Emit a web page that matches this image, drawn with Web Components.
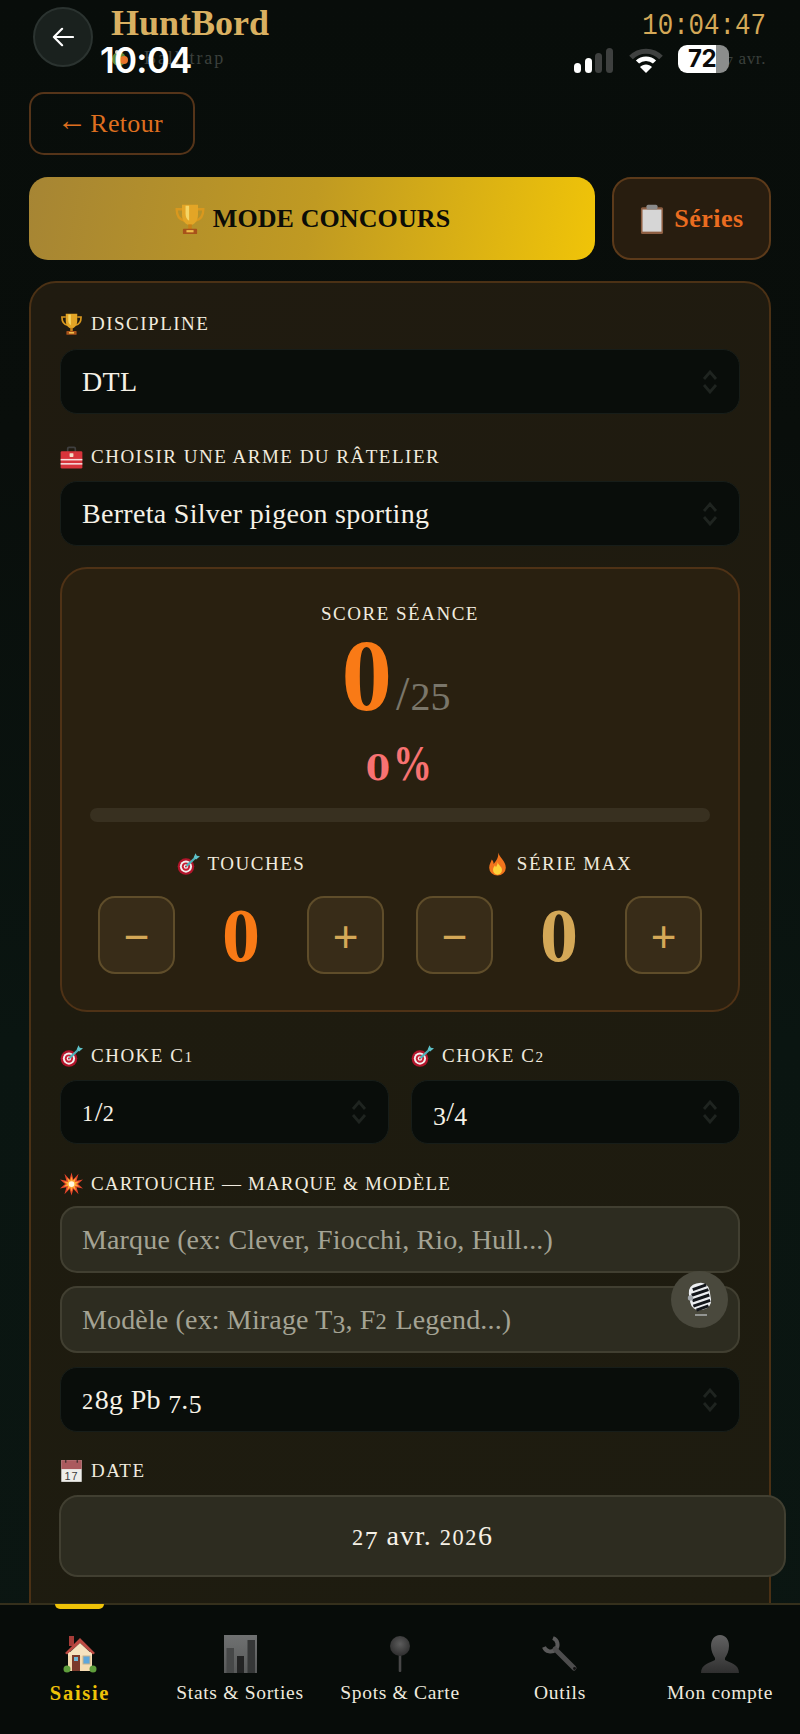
<!DOCTYPE html>
<html lang="fr"><head><meta charset="utf-8"><title>HuntBord</title>
<style>
html,body{margin:0;padding:0;background:#080d0a}
body{font-family:"Liberation Serif",serif;color:#f4efe4;width:800px;height:1734px;overflow:hidden}
</style></head><body>
<hb-app>
  <hb-status slot="overlay"></hb-status>
  <hb-mic slot="overlay"></hb-mic>
  <hb-header></hb-header>
  <hb-actions></hb-actions>
  <hb-card>
    <hb-label icon="trophy">Discipline</hb-label>
    <hb-select style="margin-top:13px">DTL</hb-select>
    <hb-label icon="toolbox" style="margin-top:31px">Choisir une arme du râtelier</hb-label>
    <hb-select style="margin-top:12px">Berreta Silver pigeon sporting</hb-select>
    <hb-score style="margin-top:21px"></hb-score>
    <hb-chokes style="margin-top:32px"></hb-chokes>
    <hb-label icon="boom" style="margin-top:28px;letter-spacing:1.15px">Cartouche — marque &amp; modèle</hb-label>
    <hb-input style="margin-top:10px" data-t="Marque (ex: Clever, Fiocchi, Rio, Hull...)"></hb-input>
    <hb-input style="margin-top:13px" data-t="Modèle (ex: Mirage T3, F2 Legend...)"></hb-input>
    <hb-select style="margin-top:14px" data-os="28g Pb 7.5"></hb-select>
    <hb-label icon="calendar" style="margin-top:27px">Date</hb-label>
    <hb-date style="margin-top:12px"></hb-date>
  </hb-card>
  <hb-nav slot="nav"></hb-nav>
</hb-app>
<script>
const os=s=>s.replace(/\d/g,d=>{
  if('012'.includes(d))return `<span style="font-size:.8em;letter-spacing:.07em">${d}</span>`;
  if('34579'.includes(d))return `<span style="font-size:.92em;vertical-align:-.16em;line-height:0">${d}</span>`;
  return d;});
const I={
trophy:`<svg viewBox="0 0 36 36"><path d="M9 7H3c0 9 4 12 9 13M27 7h6c0 9-4 12-9 13" fill="none" stroke="#d9981e" stroke-width="2.6"/><path d="M9 2h18v11c0 8-5 12-9 12S9 21 9 13z" fill="#e3a526"/><path d="M13 3h4v17c-3-2-4-5-4-8z" fill="#f5d565"/><rect x="16" y="24" width="4" height="6" fill="#c77f16"/><rect x="10" y="29" width="16" height="6" rx="1" fill="#a8521a"/><rect x="14" y="30.500" width="8" height="2.500" fill="#eebd4a"/></svg>`,
toolbox:`<svg viewBox="0 0 36 36"><path d="M12 11V5a2 2 0 0 1 2-2h8a2 2 0 0 1 2 2v6" fill="none" stroke="#3f3f3f" stroke-width="2.600"/><rect x="1" y="9" width="34" height="27" rx="2" fill="#d7343b"/><rect x="1" y="21" width="34" height="2.400" fill="#f6dede"/><rect x="1" y="27.500" width="34" height="2.400" fill="#f6dede"/><rect x="15" y="12" width="6" height="6" rx="1" fill="#f1dcc8"/></svg>`,
target:`<svg viewBox="0 0 36 36"><circle cx="14" cy="22" r="13" fill="#b3152b"/><circle cx="14" cy="22" r="9.500" fill="#f4eeee"/><circle cx="14" cy="22" r="6.500" fill="#c61f34"/><circle cx="14" cy="22" r="3.500" fill="#f4eeee"/><circle cx="14" cy="22" r="1.500" fill="#c61f34"/><path d="M15 21 30 7" stroke="#4fb0b8" stroke-width="3.500"/><path d="M26 8 29 1l2 4 5 1-6 5z" fill="#5ec2c9"/></svg>`,
fire:`<svg viewBox="0 0 36 36"><path d="M19 0c2 8 12 13 12 24a13 12 0 0 1-26 0c0-6 3-9 4-13 2 2 3 4 3 7 4-5 8-10 7-18z" fill="#f2741d"/><path d="M18 15c1 5 7 7 7 12a7 8 0 0 1-14 0c0-3 2-5 3-7 1 1 1 2 1.500 3 1-2 3-4 2.500-8z" fill="#fdd23a"/></svg>`,
boom:`<svg viewBox="0 0 36 36"><polygon points="18,0 21,11 29,2 26,13 36,11 28,18 36,25 26,23 29,34 21,26 18,36 15,26 7,34 10,23 0,25 8,18 0,11 10,13 7,2 15,11" fill="#e5452b"/><polygon points="18,6 20,13 25,8 23,15 30,14 25,18 30,22 23,21 25,28 20,23 18,30 16,23 11,28 13,21 6,22 11,18 6,14 13,15 11,8 16,13" fill="#ffac33"/><circle cx="18" cy="18" r="4.500" fill="#fff6df"/></svg>`,
calendar:`<svg viewBox="0 0 36 36"><rect x="2" y="1" width="32" height="34" fill="#eeeeea"/><rect x="2" y="1" width="32" height="14" fill="#ab5a5e"/><rect x="8" y="1" width="2" height="4" fill="#3a2a2a"/><rect x="26" y="1" width="2" height="4" fill="#3a2a2a"/><text x="18" y="32" font-family="Liberation Sans" font-size="17" text-anchor="middle" fill="#3c3c3c">17</text></svg>`,
clipboard:`<svg viewBox="0 0 30 38"><rect x="1" y="4" width="28" height="34" rx="2" fill="#8d5e42"/><rect x="3" y="7" width="24" height="28" fill="#d6d6d6"/><rect x="8" y="1" width="14" height="6" rx="2" fill="#8b8b8b"/></svg>`,
house:`<svg viewBox="1 0 34 38"><rect x="7" y="1" width="5" height="10" fill="#a63c38"/><path d="M6 17h24v19H6z" fill="#f5dcb2"/><path d="M18 3 33 18l-2 1.500L18 8 5 19.500 3 18z" fill="#bb4a42"/><path d="M18 8 30 19v2H6v-2z" fill="#f7e3c0"/><rect x="10" y="20" width="8" height="16" fill="#7b3a2c"/><rect x="12" y="22" width="4" height="4" fill="#6fb6d8"/><rect x="21" y="21" width="7" height="8" fill="#5ea7dc" stroke="#c9b38c" stroke-width="1"/><circle cx="5" cy="34" r="3.500" fill="#5f9e3c"/><circle cx="31" cy="34" r="3.500" fill="#5f9e3c"/></svg>`,
chart:`<svg viewBox="0 0 33 38"><defs><linearGradient id="c" x1="0" y1="0" x2="0" y2="1"><stop offset="0" stop-color="#6f7171"/><stop offset="1" stop-color="#585a5a"/></linearGradient></defs><rect width="33" height="38" fill="url(#c)"/><rect x="2.500" y="13" width="7.500" height="25" fill="#464848"/><rect x="13" y="21" width="7" height="17" fill="#232424"/><rect x="23.500" y="5" width="7.500" height="33" fill="#353737"/></svg>`,
pin:`<svg viewBox="0 0 20 36"><defs><radialGradient id="p" cx=".5" cy=".4" r=".6"><stop offset="0" stop-color="#5c5c5c"/><stop offset="1" stop-color="#2e2e2e"/></radialGradient></defs><rect x="8.700" y="16" width="2.600" height="20" rx="1" fill="#474747"/><circle cx="10" cy="10" r="10" fill="url(#p)"/></svg>`,
wrench:`<svg viewBox="0 0 38 38"><path d="M12 3A7 7 0 1 1 3 12" fill="none" stroke="#5a5a5a" stroke-width="4"/><path d="M14 14 33 33" stroke="#4d4d4d" stroke-width="5" stroke-linecap="round"/><circle cx="33.500" cy="33.500" r="1.400" fill="#111"/></svg>`,
user:`<svg viewBox="0 0 38 38"><defs><linearGradient id="u" x1="0" y1="0" x2="0" y2="1"><stop offset="0" stop-color="#626262"/><stop offset="1" stop-color="#2f2f2f"/></linearGradient></defs><path d="M19 0c6 0 9 5 9 11 0 5-2 9-4 12v2c5 3 14 4 14 13H0c0-9 9-10 14-13v-2c-2-3-4-7-4-12C10 5 13 0 19 0z" fill="url(#u)"/></svg>`,
mic:`<svg viewBox="0 0 26 36"><g transform="rotate(-9 13 15)"><rect x="2.500" y="1" width="21" height="27" rx="9" fill="#eceef1"/><g stroke="#13161b" stroke-width="3"><path d="M7 6.500 21 4M5 12 22.500 9M5 17.500 22.500 14.500M5 23 22.500 20M7.500 27.500 20 25"/></g></g><circle cx="3.500" cy="16" r="2.700" fill="#a2a7ac"/><path d="M8 33h12" stroke="#b4b6b8" stroke-width="1.400"/></svg>`,
target2:`<svg viewBox="0 0 20 20"><circle cx="8" cy="11" r="7" fill="#5e8a3a"/><circle cx="13" cy="12" r="4" fill="#e8742a"/><circle cx="6" cy="4" r="2" fill="#d8d8c8"/></svg>`
};
function def(name,css,render){customElements.define(name,class extends HTMLElement{
  connectedCallback(){if(this.shadowRoot)return;const r=this.attachShadow({mode:'open'});
    r.innerHTML=`<style>${css}</style>`+render(this);}
});}
def('hb-icon',`:host{display:inline-flex;flex:none}svg{display:block;width:100%;height:100%}`,e=>I[e.getAttribute('name')]);
def('hb-app',`:host{display:flex;flex-direction:column;position:relative;width:800px;height:1734px;overflow:hidden;
  background:linear-gradient(180deg,#080d0a 0,#090e0b 25%,#0a1511 60%,#0b1612 100%)}
  main{flex:1;min-height:0;overflow:hidden}`,
  ()=>`<main><slot></slot></main><slot name="nav"></slot><slot name="overlay"></slot>`);
def('hb-status',`:host{position:absolute;left:0;top:0;width:800px;height:80px;display:block;font-family:Inter,sans-serif;color:#fff}
  .t{position:absolute;left:100px;top:39px;font-size:35px;font-weight:600;line-height:42px;letter-spacing:-.8px}
  .r{position:absolute;left:574px;top:45px;width:160px;height:28px;display:flex;align-items:flex-end}
  .bars{display:flex;align-items:flex-end;gap:3.500px;height:25px}
  .bars i{display:block;width:7px;border-radius:3.500px;background:#fff}
  .bars i.o{background:#3e403f}
  .w{width:34px;height:25px;margin-left:16px;display:block}
  .b{width:51px;height:28px;margin-left:15px;border-radius:9px;background:linear-gradient(90deg,#fff 0,#fff 75%,#8b8d8c 75%);color:#0a0a0a;
     font-size:24px;font-weight:700;line-height:28px;text-align:center;letter-spacing:-.5px;padding-right:2px;box-sizing:border-box}`,
  ()=>`<div class="t">10:04</div><div class="r"><div class="bars"><i style="height:10px"></i><i style="height:15px"></i><i class="o" style="height:20px"></i><i class="o" style="height:25px"></i></div>
  <svg class="w" viewBox="0 0 34 25"><path d="M2 9.500C10 1 24 1 32 9.500" fill="none" stroke="#3f4140" stroke-width="5"/><path d="M8.500 14C13 9.500 21 9.500 25.500 14" fill="none" stroke="#fff" stroke-width="4.500"/><path d="M11 19c3-3.500 9-3.500 12 0l-6 6z" fill="#fff"/></svg>
  <div class="b">72</div></div>`);
def('hb-header',`:host{display:block}
  .h{display:flex;height:92px;box-sizing:border-box;padding:7px 34px 0 33px}
  .back{width:60px;height:60px;border-radius:50%;box-sizing:border-box;background:#1a211e;border:2px solid #2b3330;display:flex;align-items:center;justify-content:center}
  .back svg{width:22px;height:20px}
  .ti{margin-left:18px;flex:1}
  h1{margin:0;font-size:36px;line-height:38px;font-weight:700;color:#d9b061;margin-top:-3px}
  .sub{display:flex;align-items:center;gap:13px;font-size:18px;letter-spacing:1.900px;color:#3b403c;margin-top:6px;line-height:20px}
  .sub hb-icon{width:20px;height:20px}
  .rt{text-align:right}
  .c{font-family:"Liberation Mono",monospace;font-size:30px;line-height:30px;color:#d4a857;margin-top:4px;transform:scaleX(.86);transform-origin:right center;display:block}
  .d{font-size:17px;line-height:20px;color:#3b403c;margin-top:8px;letter-spacing:.6px}
  .ret{margin-left:29px;width:166px;height:63px;box-sizing:border-box;border:2px solid #553419;border-radius:15px;color:#de6f1f;font-size:26px;display:flex;align-items:center;justify-content:center;letter-spacing:.3px;gap:3px}
  .ret i{font-style:normal;font-size:30px;line-height:30px;margin:-8px 0 0 -4px}`,
  ()=>`<div class="h"><div class="back"><svg viewBox="0 0 24 22"><path d="M11 2 2 11l9 9M2.500 11H23" fill="none" stroke="#fff" stroke-width="2.400" stroke-linecap="round" stroke-linejoin="round"/></svg></div>
   <div class="ti"><h1>HuntBord</h1><div class="sub"><hb-icon name="target2"></hb-icon><span>Ball-trap</span></div></div>
   <div class="rt"><div class="c">10:04:47</div><div class="d">${os('27')} avr.</div></div></div>
   <div class="ret"><i>←</i><span>Retour</span></div>`);
def('hb-actions',`:host{display:flex;gap:17px;padding:22px 29px 21px}
  .m,.s{height:83px;box-sizing:border-box;display:flex;align-items:center;justify-content:center;font-weight:700;font-size:26px}
  .m{flex:none;width:566px;border-radius:19px;background:linear-gradient(100deg,#a68534 0,#c09a22 50%,#f0c408 100%);color:#0b0c07;gap:7px;letter-spacing:.1px}
  .s{flex:1;border:2px solid #5c3a1a;border-radius:19px;background:#281d0f;color:#ea6c20;gap:9px;letter-spacing:.5px}
  .m hb-icon{width:32px;height:34px}.s hb-icon{width:26px;height:30px}`,
  ()=>`<div class="m"><hb-icon name="trophy"></hb-icon><span>MODE CONCOURS</span></div><div class="s"><hb-icon name="clipboard"></hb-icon><span>Séries</span></div>`);
def('hb-card',`:host{display:block;margin:0 29px;box-sizing:border-box;border:2px solid #4b3115;border-radius:27px;
  background:linear-gradient(165deg,#201b10 0,#1e1b0f 45%,#1e1c10 100%);padding:29px 29px 70px}`,()=>`<slot></slot>`);
def('hb-label',`:host{display:flex;align-items:center;height:24px;gap:8px;font-size:19px;letter-spacing:1.500px;text-transform:uppercase;color:#f1ebdf;white-space:nowrap}
  hb-icon{width:23px;height:24px}`,e=>`<hb-icon name="${e.getAttribute('icon')}"></hb-icon><span>${e.dataset.os?os(e.dataset.os):'<slot></slot>'}</span>`);
def('hb-select',`:host{display:flex;align-items:center;height:65px;box-sizing:border-box;padding:0 21px;border:1.500px solid #171d19;border-radius:17px;background:#090d0a;color:#f6f1e6;font-size:28px;letter-spacing:.3px}
  span{flex:1}svg{width:16px;height:24px;flex:none}`,
  e=>`<span>${e.dataset.os?os(e.dataset.os):'<slot></slot>'}</span><svg viewBox="0 0 16 24"><path d="M2 9l6-7 6 7M2 15l6 7 6-7" fill="none" stroke="#1f2420" stroke-width="2.800"/></svg>`);
def('hb-input',`:host{display:flex;align-items:center;height:67px;box-sizing:border-box;padding:0 20px;border:2px solid #413f31;border-radius:17px;background:#2d2c20;color:#a4a394;font-size:28px;letter-spacing:.15px;white-space:nowrap}`,
  e=>`<span>${os(e.dataset.t)}</span>`);
def('hb-date',`:host{display:flex;align-items:center;justify-content:center;width:727px;margin-left:-1px;height:82px;box-sizing:border-box;border:2px solid #413f31;border-radius:19px;background:#2d2c20;color:#f6f1e6;font-size:28px;letter-spacing:1px}`,
  ()=>`<span>${os('27 avr. 2026')}</span>`);
def('hb-chokes',`:host{display:grid;grid-template-columns:329px 329px;column-gap:22px}
  hb-select{margin-top:12px;height:64px}`,
  ()=>`<div><hb-label icon="target" data-os="Choke C1"></hb-label><hb-select data-os="1/2"></hb-select></div><div><hb-label icon="target" data-os="Choke C2"></hb-label><hb-select data-os="3/4"></hb-select></div>`);
def('hb-score',`:host{display:block;box-sizing:border-box;height:445px;border:2px solid #4f3216;border-radius:27px;background:#292010;padding:34px 28px 0}
  .l{text-align:center;font-size:19px;line-height:22px;letter-spacing:1.500px;color:#f1ebdf}
  .big{display:flex;justify-content:center;align-items:baseline;line-height:96px;height:96px;margin-top:3px;margin-left:-8px}
  .big b{font-size:101px;color:#f97a16;font-weight:700;margin-right:4px}
  .big i{font-style:normal;font-size:48px;color:#7a766a;margin-right:1px}
  .big span{font-size:40px;color:#7a766a}
  .pc{display:flex;justify-content:center;align-items:baseline;font-weight:700;color:#f87272;line-height:50px;margin-top:14px;height:54px;gap:3px}
  .pc u{text-decoration:none;font-family:"DejaVu Serif",serif;font-size:35px}
  .pc s{text-decoration:none;font-size:50px;display:inline-block;width:41px;transform:scaleX(.78);transform-origin:left center}
  .bar{height:14px;border-radius:7px;background:#383020;margin-top:16px}
  .g{display:grid;grid-template-columns:1fr 1fr;column-gap:16px;margin-top:30px}`,
  ()=>`<div class="l">SCORE SÉANCE</div><div class="big"><b>0</b><i>/</i><span>25</span></div><div class="pc"><u>0</u><s>%</s></div><div class="bar"></div>
  <div class="g"><hb-stepper icon="target" label="Touches" color="#f97a16"></hb-stepper><hb-stepper icon="fire" label="Série max" color="#d4a857"></hb-stepper></div>`);
def('hb-stepper',`:host{display:block;padding:0 8px}
  hb-label{justify-content:center}
  .r{display:flex;justify-content:space-between;align-items:center;margin-top:20px}
  .b{width:77px;height:78px;box-sizing:border-box;border:2px solid #5f4d2a;border-radius:17px;background:#382c18;color:#d4a857;font-size:44px;line-height:78px;text-align:center;font-family:"Liberation Sans",sans-serif}
  .v{font-size:76px;font-weight:700;line-height:78px}`,
  e=>`<hb-label icon="${e.getAttribute('icon')}">${e.getAttribute('label')}</hb-label><div class="r"><div class="b">−</div><div class="v" style="color:${e.getAttribute('color')}">0</div><div class="b">+</div></div>`);
def('hb-nav',`:host{display:grid;grid-template-columns:repeat(5,160px);position:relative;height:131px;box-sizing:border-box;border-top:2px solid #35301c;background:#070c09}
  .ind{position:absolute;left:55px;top:-1px;width:49px;height:5px;background:#eec208;border-radius:0 0 5px 5px}`,
  ()=>`<div class="ind"></div><hb-tab icon="house" w="40" on>Saisie</hb-tab><hb-tab icon="chart" w="33">Stats &amp; Sorties</hb-tab><hb-tab icon="pin" w="20">Spots &amp; Carte</hb-tab><hb-tab icon="wrench" w="38">Outils</hb-tab><hb-tab icon="user" w="38">Mon compte</hb-tab>`);
def('hb-tab',`:host{display:flex;flex-direction:column;align-items:center;padding-top:30px;font-size:19.500px;letter-spacing:.7px;color:#efeadf;white-space:nowrap}
  :host([on]){color:#eec208;font-weight:700;font-size:20.500px;letter-spacing:1.700px}
  hb-icon{height:38px}.t{margin-top:8px;line-height:24px}`,
  e=>`<hb-icon name="${e.getAttribute('icon')}" style="width:${e.getAttribute('w')||36}px"></hb-icon><div class="t"><slot></slot></div>`);
def('hb-mic',`:host{position:absolute;left:671px;top:1271px;width:57px;height:57px;border-radius:50%;background:#4a493d;display:flex;align-items:center;justify-content:center}
  hb-icon{width:26px;height:38px}`,()=>`<hb-icon name="mic"></hb-icon>`);
</script>
</body></html>
